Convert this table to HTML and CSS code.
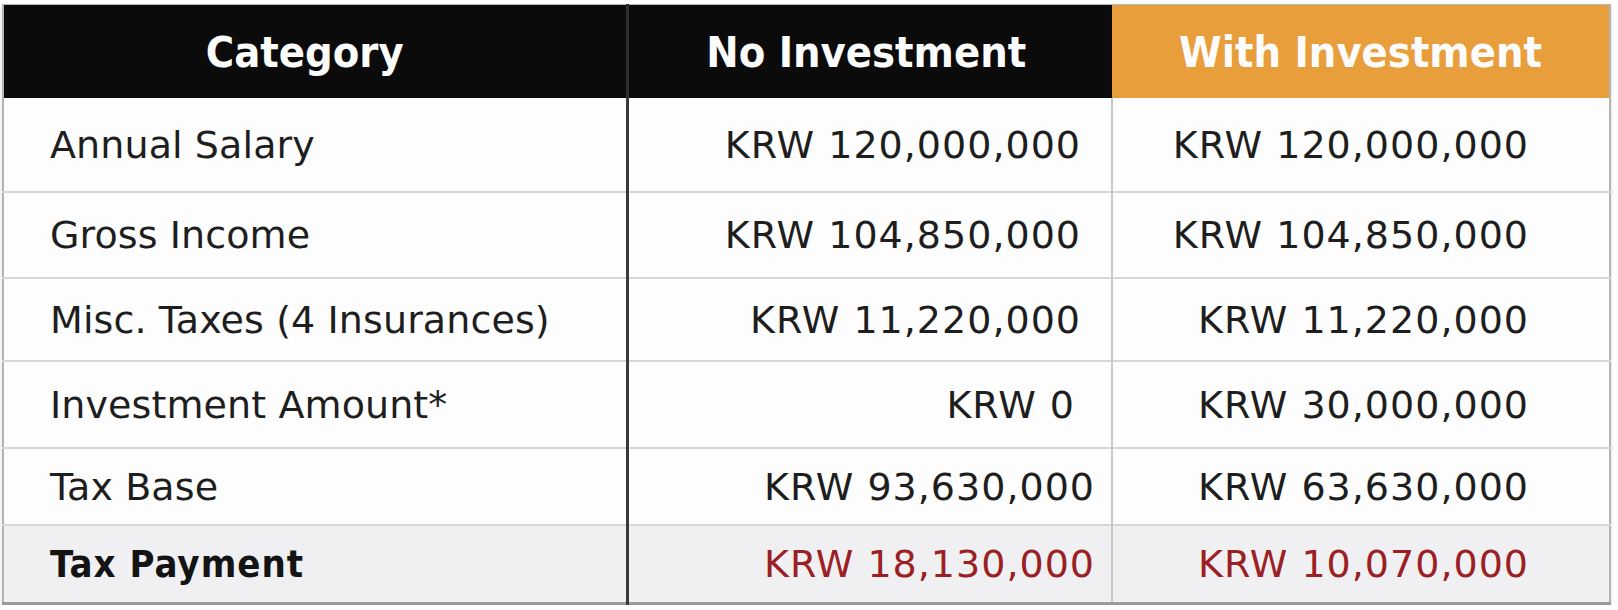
FILE: index.html
```html
<!DOCTYPE html>
<html lang="en">
<head>
<meta charset="utf-8">
<title>Tax comparison</title>
<link rel="stylesheet" href="styles.css">
</head>
<body>
<div class="page">
  <table class="tax-table">
    <colgroup>
      <col class="col-cat">
      <col class="col-no">
      <col class="col-with">
    </colgroup>
    <thead>
      <tr>
        <th class="h-cat">Category</th>
        <th class="h-no">No Investment</th>
        <th class="h-with">With Investment</th>
      </tr>
    </thead>
    <tbody>
      <tr class="r1">
        <td class="label">Annual Salary</td>
        <td class="num no">KRW 120,000,000</td>
        <td class="num with">KRW 120,000,000</td>
      </tr>
      <tr class="r2">
        <td class="label">Gross Income</td>
        <td class="num no">KRW 104,850,000</td>
        <td class="num with">KRW 104,850,000</td>
      </tr>
      <tr class="r3">
        <td class="label">Misc. Taxes (4 Insurances)</td>
        <td class="num no">KRW 11,220,000</td>
        <td class="num with">KRW 11,220,000</td>
      </tr>
      <tr class="r4">
        <td class="label">Investment Amount*</td>
        <td class="num no zero">KRW 0</td>
        <td class="num with">KRW 30,000,000</td>
      </tr>
      <tr class="r5">
        <td class="label">Tax Base</td>
        <td class="num no wide">KRW 93,630,000</td>
        <td class="num with">KRW 63,630,000</td>
      </tr>
      <tr class="r6 total">
        <td class="label">Tax Payment</td>
        <td class="num no wide">KRW 18,130,000</td>
        <td class="num with">KRW 10,070,000</td>
      </tr>
    </tbody>
  </table>
</div>
</body>
</html>
```

FILE: styles.css
```css
html, body {
  margin: 0;
  padding: 0;
  background: #ffffff;
}

.page {
  padding: 4px 0 0 2px;
}

.tax-table {
  width: 1609px;
  border-collapse: collapse;
  table-layout: fixed;
  font-family: "DejaVu Sans", "Liberation Sans", sans-serif;
  color: #1e1e1e;
  border: 2px solid #b4b4b4;
  border-bottom: 3px solid #9a9a9a;
  border-top: 1px solid #b8b8b8;
  box-shadow: 0 2px 3px rgba(0, 0, 0, 0.18);
}

.col-cat { width: 624px; }
.col-no { width: 485px; }
.col-with { width: 498px; }

thead th {
  height: 93px;
  padding: 0;
  font-family: "DejaVu Sans Condensed", "DejaVu Sans", sans-serif;
  font-weight: 700;
  font-size: 43px;
  color: #fcfcfc;
  text-align: center;
  vertical-align: middle;
  background: #0b0b0b;
}

thead .h-cat {
  padding-right: 20px;
  border-right: 3px solid #2e2e2e;
}

thead .h-no {
  padding-right: 8px;
}

thead .h-with {
  background: #e99e3c;
}

tbody td {
  padding: 0;
  font-size: 38px;
  letter-spacing: 0.1px;
  vertical-align: middle;
  border-top: 2px solid #d6d6d6;
  background: #fdfdfd;
}

tbody tr.r1 td { border-top: none; height: 93px; }
tbody tr.r2 td { height: 84px; }
tbody tr.r3 td { height: 81px; }
tbody tr.r4 td { height: 85px; }
tbody tr.r5 td { height: 75px; }
tbody tr.r6 td { height: 76px; }

td.label {
  padding-left: 46px;
  border-right: 3px solid #3a3a3a;
  white-space: nowrap;
}

td.num {
  text-align: right;
  white-space: nowrap;
  letter-spacing: 1px;
}

td.no {
  padding-right: 30px;
  border-right: 2px solid #c8c8c8;
}

td.no.wide {
  padding-right: 16px;
}

td.no.zero {
  padding-right: 36px;
}

td.with {
  padding-right: 80px;
}

tr.total td {
  background: #f0f0f2;
}

tr.total td.label {
  font-family: "DejaVu Sans Condensed", "DejaVu Sans", sans-serif;
  font-weight: 700;
  letter-spacing: 1px;
  color: #141414;
}

tr.total td.num {
  color: #9a2024;
}
```
